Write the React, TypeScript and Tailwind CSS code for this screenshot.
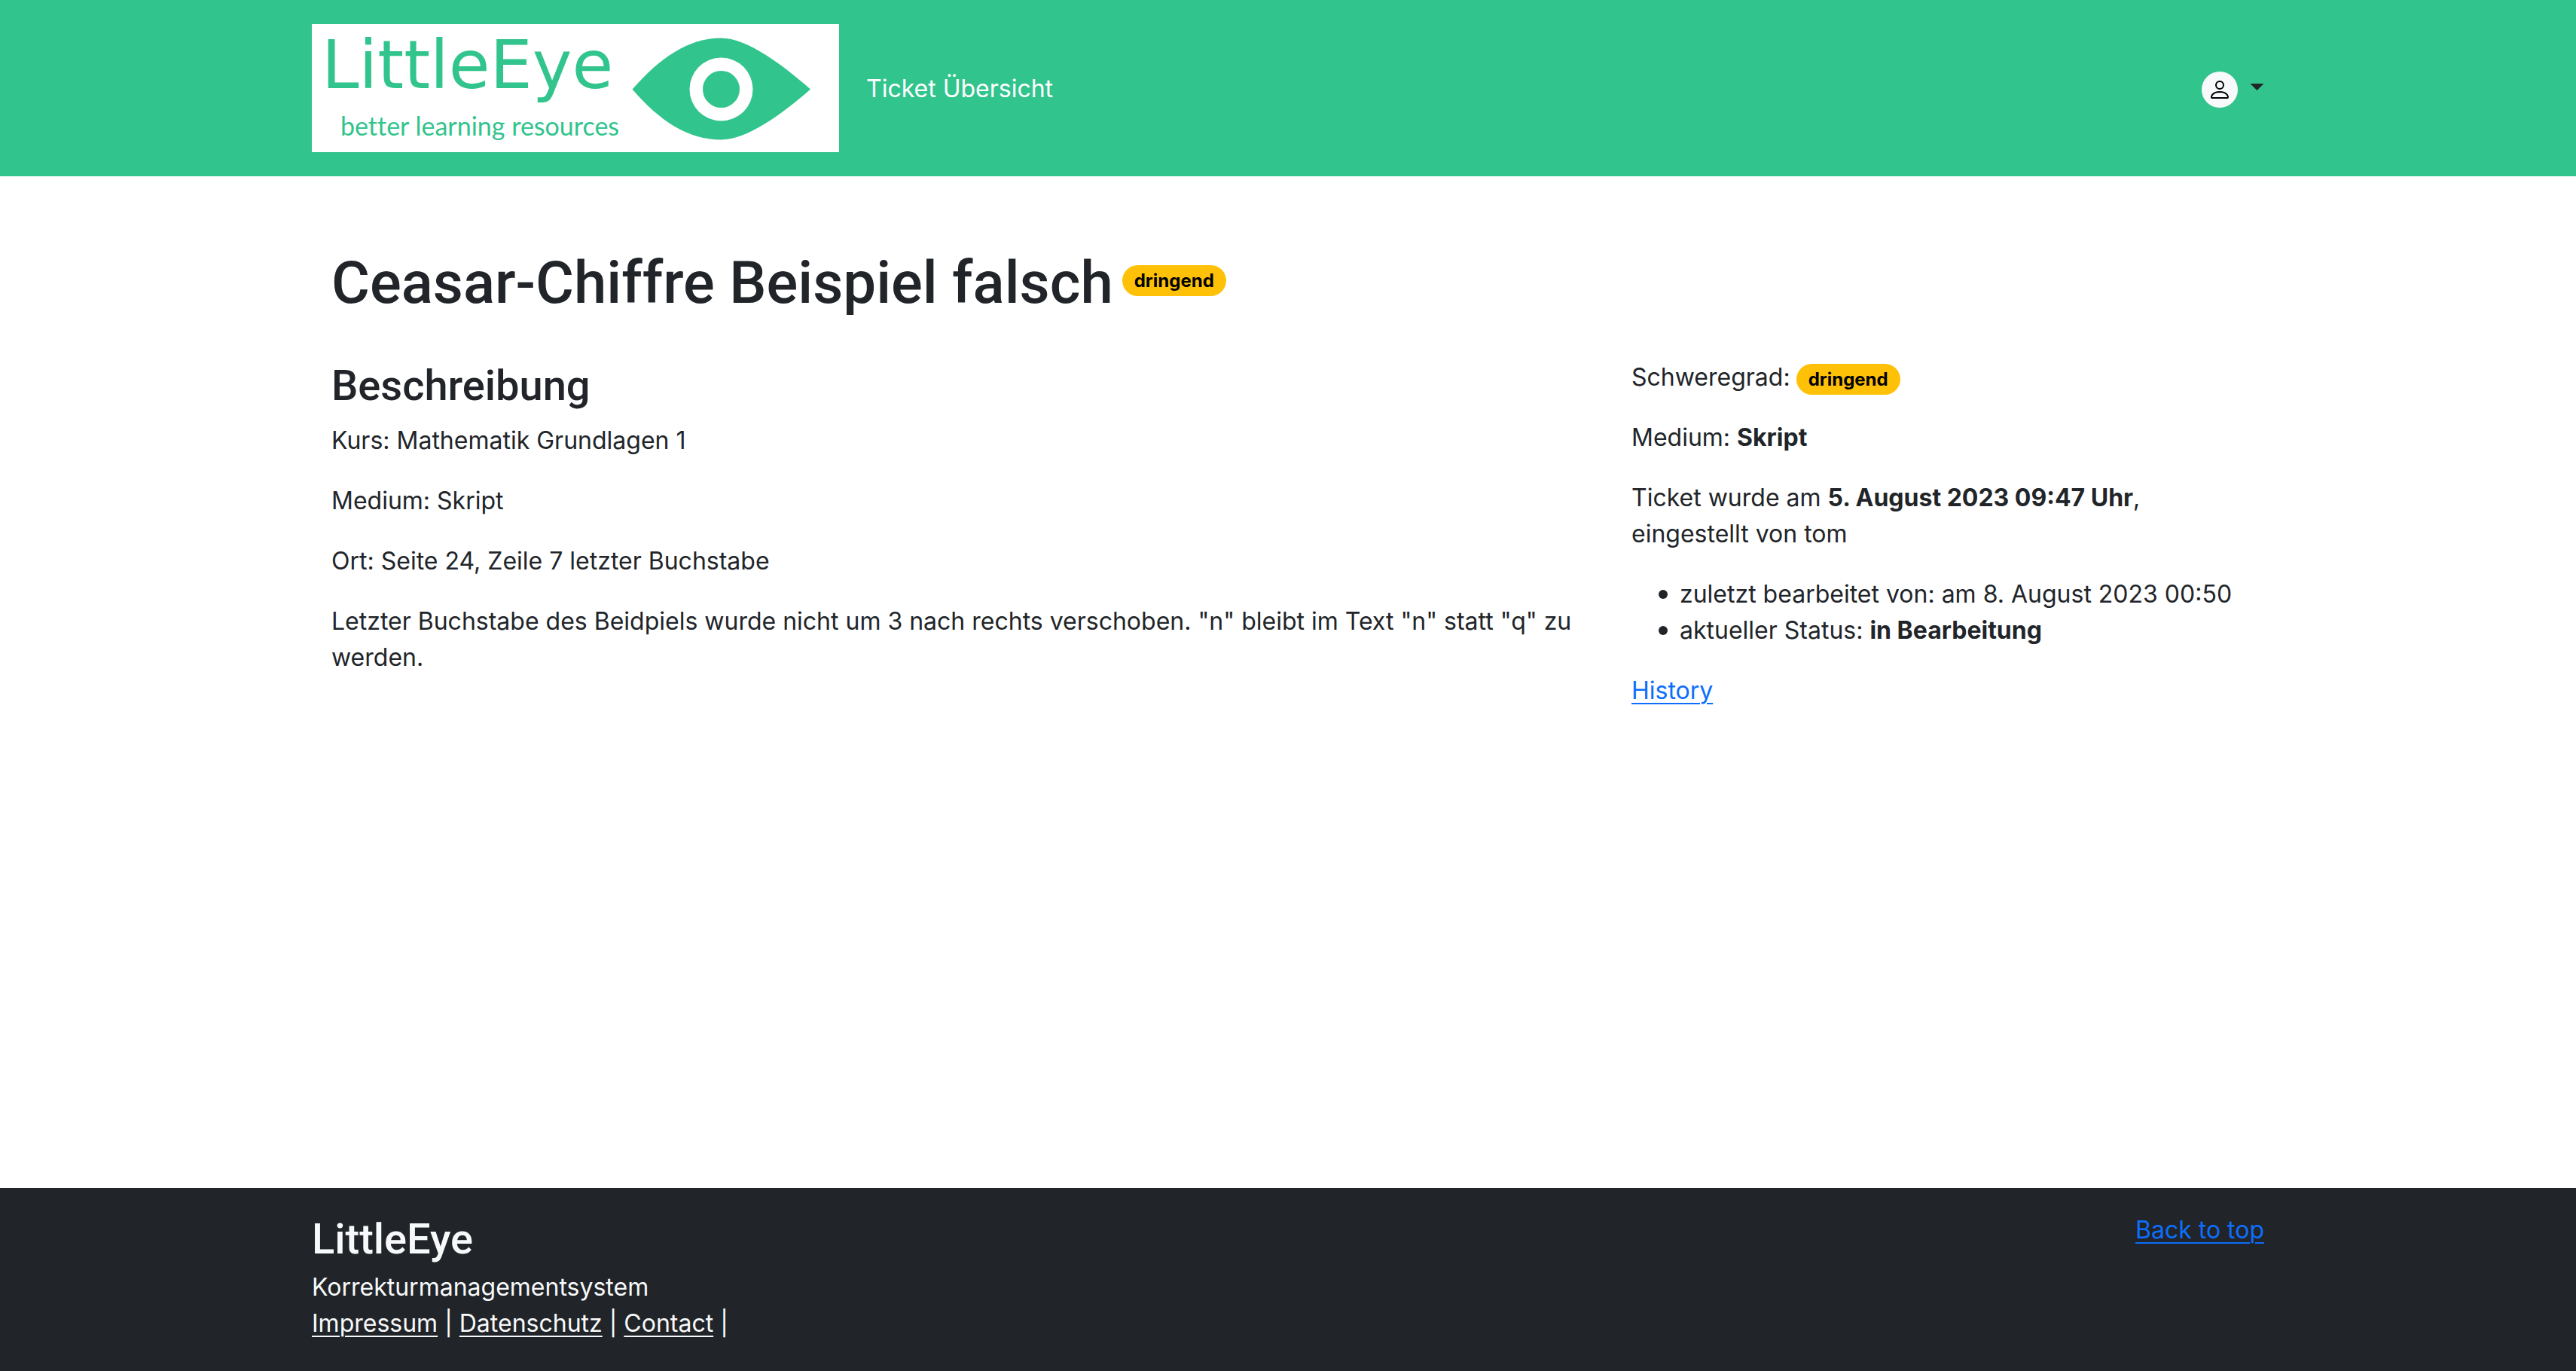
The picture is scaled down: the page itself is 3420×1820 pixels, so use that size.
import React from "react";

function Logo() {
  return (
    <svg
      viewBox="0 0 700 170"
      className="h-[170px] w-[700px] bg-white"
      role="img"
      aria-label="LittleEye – better learning resources"
    >
      <g fill="#32c48d">
        <text x="13" y="85" fontSize="89" fontFamily="'DejaVu Sans', sans-serif">
          LittleEye
        </text>
        <text x="38" y="148" fontSize="34" fontFamily="Lato, sans-serif" style={{ fontVariantLigatures: "none" }}>
          better learning resources
        </text>
        <path d="M425.500 86.500C462 45 500 18.500 543 18.500C575 18.500 618 48 662 86.500C618 125 575 153.500 543 153.500C500 153.500 462 129 425.500 86.500Z" />
        <circle cx="543.500" cy="86.500" r="42" fill="#fff" />
        <circle cx="543.500" cy="86.500" r="24.500" />
      </g>
    </svg>
  );
}

function Badge({ children }: { children: React.ReactNode }) {
  return (
    <span className="inline-block rounded-full bg-[#ffc107] px-4 py-2 text-[24px] leading-[25px] font-bold text-black">
      {children}
    </span>
  );
}

function Bullet({ children }: { children: React.ReactNode }) {
  return (
    <li className="flex items-center gap-4">
      <span aria-hidden="true" className="size-3 shrink-0 rounded-full bg-[#212529]" />
      <span>{children}</span>
    </li>
  );
}

const footerLinks = ["Impressum", "Datenschutz", "Contact"];

export default function App() {
  return (
    <div className="flex min-h-screen flex-col bg-white font-['Inter',sans-serif] text-[32px] leading-[48px] text-[#212529]">
      <header className="bg-[#32c48d] py-8">
        <div className="mx-auto flex w-full max-w-[2640px] items-center px-6">
          <a href="#home" className="mr-9">
            <Logo />
          </a>
          <nav className="flex-1 pt-[2px]">
            <a href="#tickets" className="text-white">
              Ticket Übersicht
            </a>
          </nav>
          <button type="button" aria-label="Benutzermenü" className="flex items-center gap-4 pt-1">
            <span className="flex size-12 items-center justify-center rounded-full bg-[#f8f9fa]">
              <svg viewBox="0 0 16 16" className="size-8" fill="#000">
                <path d="M8 8a3 3 0 1 0 0-6 3 3 0 0 0 0 6m2-3a2 2 0 1 1-4 0 2 2 0 0 1 4 0m4 8c0 1-1 1-1 1H3s-1 0-1-1 1-4 6-4 6 3 6 4m-1-.004c-.001-.246-.154-.986-.832-1.664C11.516 10.680 10.289 10 8 10s-3.516.680-4.168 1.332c-.678.678-.830 1.418-.832 1.664z" />
              </svg>
            </span>
            <svg viewBox="0 0 19 9" className="mb-2 h-[9px] w-[19px]" fill="#212529">
              <path d="M0.500 0H18.500L9.500 9Z" />
            </svg>
          </button>
        </div>
      </header>

      <main className="mx-auto w-full max-w-[2640px] flex-1 px-6 pt-[94px]">
        <div className="flex items-center gap-3 px-[26px]">
          <h1 className="font-['Roboto',sans-serif] text-[78px] leading-[96px] font-medium">
            Ceasar-Chiffre Beispiel falsch
          </h1>
          <div className="mb-2 flex">
            <Badge>dringend</Badge>
          </div>
        </div>
        <div className="mt-[53px] grid grid-cols-[2fr_1fr]">
          <section className="flex flex-col px-[26px]">
            <h2 className="mb-[14px] font-['Roboto',sans-serif] text-[56px] leading-[70px] font-medium">
              Beschreibung
            </h2>
            <div className="flex flex-col gap-8">
              <p>Kurs: Mathematik Grundlagen 1</p>
              <p>Medium: Skript</p>
              <p>Ort: Seite 24, Zeile 7 letzter Buchstabe</p>
              <p>
                Letzter Buchstabe des Beidpiels wurde nicht um 3 nach rechts verschoben. "n" bleibt im Text "n" statt
                "q" zu werden.
              </p>
            </div>
          </section>
          <aside className="flex flex-col gap-8 px-6">
            <div className="flex items-center gap-2">
              <p>Schweregrad:</p>
              <div className="mt-1 flex">
                <Badge>dringend</Badge>
              </div>
            </div>
            <p>
              Medium: <strong>Skript</strong>
            </p>
            <p>
              Ticket wurde am <strong>5. August 2023 09:47 Uhr</strong>,
              <br />
              eingestellt von tom
            </p>
            <ul className="pl-9">
              <Bullet>zuletzt bearbeitet von: am 8. August 2023 00:50</Bullet>
              <Bullet>
                aktueller Status: <strong>in Bearbeitung</strong>
              </Bullet>
            </ul>
            <p>
              <a href="#history" className="text-[#0d6efd] underline decoration-2 underline-offset-[5px]">
                History
              </a>
            </p>
          </aside>
        </div>
      </main>

      <footer className="bg-[#212529] pt-8 pb-[39px] text-[#f8f9fa]">
        <div className="mx-auto flex w-full max-w-[2640px] items-start justify-between px-6">
          <div>
            <h2 className="mb-1 font-['Roboto',sans-serif] text-[56px] leading-[72px] font-medium">LittleEye</h2>
            <p>Korrekturmanagementsystem</p>
            <p>
              {footerLinks.map((label) => (
                <React.Fragment key={label}>
                  <a href={"#" + label.toLowerCase()} className="underline decoration-2 underline-offset-[5px]">
                    {label}
                  </a>
                  {" | "}
                </React.Fragment>
              ))}
            </p>
          </div>
          <a href="#top" className="text-[#0d6efd] underline decoration-2 underline-offset-[5px]">
            Back to top
          </a>
        </div>
      </footer>
    </div>
  );
}
